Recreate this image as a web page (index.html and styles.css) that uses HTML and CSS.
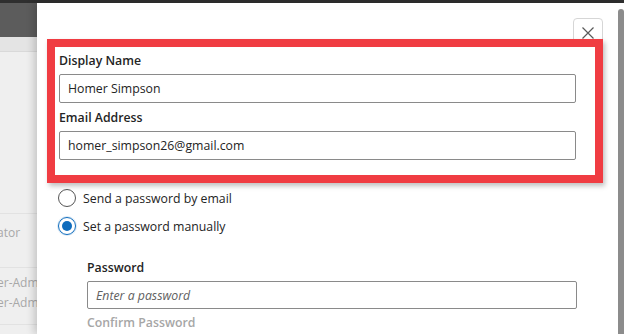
FILE: index.html
```html
<!DOCTYPE html>
<html lang="en">
<head>
<meta charset="utf-8">
<title>Add user</title>
<link rel="stylesheet" href="styles.css">
</head>
<body>
<div class="screen">
  <aside class="backdrop">
    <div class="bd-topbar"></div>
    <div class="bd-header"></div>
    <div class="bd-row bd-row-tall"></div>
    <div class="bd-row bd-row-a"><span class="bd-text">ator</span></div>
    <div class="bd-row bd-row-b"><span class="bd-text">er-Admi</span><span class="bd-text">er-Admi</span></div>
    <div class="bd-row"></div>
  </aside>
  <main class="modal">
    <div class="modal-body">
      <button class="close-btn" aria-label="Close">
        <svg width="14" height="14" viewBox="0 0 14 14"><path d="M1.5 1.5 L12.5 12.5 M12.5 1.5 L1.5 12.5" stroke="#5a5a5a" stroke-width="1.2" fill="none"/></svg>
      </button>
      <section class="highlight">
        <label class="field-label">Display Name</label>
        <div class="input"><span class="value">Homer Simpson</span></div>
        <label class="field-label">Email Address</label>
        <div class="input"><span class="value">homer_simpson26@gmail.com</span></div>
      </section>
      <div class="radios">
        <div class="radio-row"><span class="radio"></span><span class="radio-text">Send a password by email</span></div>
        <div class="radio-row"><span class="radio checked"></span><span class="radio-text">Set a password manually</span></div>
      </div>
      <div class="password-block">
        <label class="field-label">Password</label>
        <div class="input"><span class="placeholder">Enter a password</span></div>
        <label class="field-label disabled">Confirm Password</label>
      </div>
    </div>
    <div class="scroll-track"><div class="scroll-thumb"></div></div>
  </main>
</div>
</body>
</html>
```
FILE: styles.css
```css
* { box-sizing: border-box; }
html, body { margin: 0; padding: 0; }
body {
  width: 624px;
  height: 334px;
  overflow: hidden;
  background: #ffffff;
  font-family: "Open Sans", "Noto Sans", sans-serif;
  color: #242424;
}
.screen {
  display: flex;
  height: 334px;
  border-top: 3px solid #2f2f2f;
}
.backdrop {
  width: 37px;
  flex: none;
  display: flex;
  flex-direction: column;
  background: #efefef;
  overflow: hidden;
}
.bd-topbar { height: 34px; background: #5c5c5c; flex: none; }
.bd-header { height: 15px; background: #e4e4e4; border-bottom: 1px solid #d9d9d9; flex: none; }
.bd-row { border-bottom: 1px solid #e2e2e2; flex: none; height: 58px; }
.bd-row-tall { height: 162px; }
.bd-row-a { height: 54px; padding-top: 6px; }
.bd-row-b { height: 57px; padding-top: 5px; display: flex; flex-direction: column; }
.bd-text {
  font-size: 12px;
  line-height: 20px;
  color: #a8a8a8;
  white-space: nowrap;
  margin-left: -3px;
}
.modal {
  flex: 1;
  display: flex;
  background: #ffffff;
  box-shadow: -3px 0 8px rgba(0,0,0,0.18);
  position: relative;
  z-index: 1;
}
.modal-body {
  flex: 1;
  position: relative;
  padding: 36px 0 0 10px;
}
.close-btn {
  position: absolute;
  left: 536px;
  top: 15px;
  width: 30px;
  height: 30px;
  border: 1px solid #d6d6d6;
  border-radius: 4px;
  background: #fff;
  padding: 0;
  display: flex;
  align-items: center;
  justify-content: center;
}
.highlight {
  position: relative;
  z-index: 2;
  width: 556px;
  border: 8px solid #f03c42;
  background: #fff;
  padding: 4px 19px 10px 4px;
  box-shadow: 2px 3px 5px rgba(0,0,0,0.25);
}
.field-label {
  display: block;
  font-size: 12.3px;
  font-weight: 600;
  line-height: 19px;
  margin-bottom: 4px;
}
.field-label.disabled { color: #a6a6a6; margin-top: 4px; }
.input {
  height: 29px;
  border: 1px solid #8a8a8a;
  border-radius: 2px;
  padding: 0 8px;
  display: flex;
  align-items: center;
  font-size: 12.3px;
  margin-bottom: 5px;
}
.value { color: #242424; }
.placeholder { color: #616161; font-style: italic; }
.radios {
  padding: 6px 0 0 11px;
  display: flex;
  flex-direction: column;
  gap: 10px;
}
.radio-row {
  display: flex;
  align-items: center;
  gap: 7px;
  height: 18px;
}
.radio {
  width: 18px;
  height: 18px;
  border: 1px solid #555;
  border-radius: 50%;
  flex: none;
  display: flex;
  align-items: center;
  justify-content: center;
}
.radio.checked { border-color: #0f6cbd; box-shadow: 0 0 0 1px rgba(15,108,189,0.15); }
.radio.checked::after {
  content: "";
  width: 10px;
  height: 10px;
  border-radius: 50%;
  background: #0f6cbd;
}
.radio-text { font-size: 12.3px; color: #242424; }
.password-block {
  padding: 23px 41px 0 40px;
}
.password-block .input { height: 28px; margin-bottom: 3px; }
.scroll-track {
  width: 6px;
  flex: none;
  padding-top: 6px;
}
.scroll-thumb {
  height: 100%;
  background: #8c8c8c;
  border-radius: 3px 3px 0 0;
}
```
